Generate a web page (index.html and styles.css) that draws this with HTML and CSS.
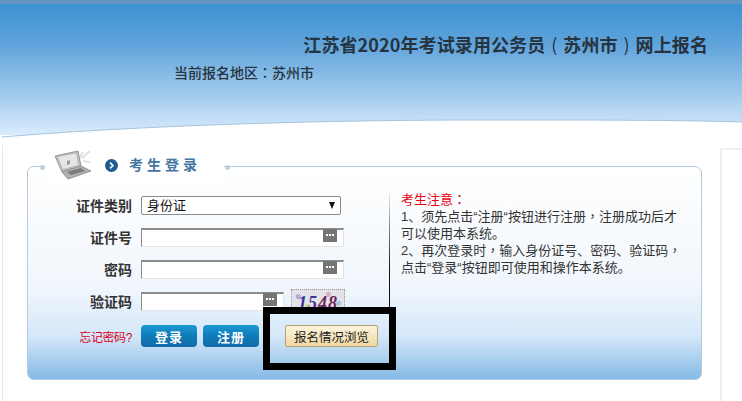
FILE: index.html
```html
<!DOCTYPE html>
<html lang="zh-CN">
<head>
    <meta charset="UTF-8">
    <title>考生登录</title>
    <link rel="stylesheet" href="styles.css">
</head>
<body>
    <div class="page">
        <div class="header">
            <h1 class="title">江苏省2020年考试录用公务员<span class="paren">(</span>苏州市<span class="paren">)</span>网上报名</h1>
            <div class="area">当前报名地区<span class="punct" lang="zh-TW">：</span>苏州市</div>
        </div>
        <svg class="curve" width="742" height="30" viewBox="0 0 742 30">
            <path d="M2 22 C 120 12 300 5 480 5 C 600 5 680 5 742 7 L742 30 L2 30 Z" fill="#fff"/>
            <path d="M2 22 C 120 12 300 5 480 5 C 600 5 680 5 742 7" fill="none" stroke="#a8c3dc"/>
        </svg>
        <div class="main">
            <div class="card">
                <div class="legend">
                    <svg class="laptop" width="38" height="32" viewBox="0 0 38 32">
                        <path d="M25 11 L29 4 M28 10 L36 3 M29 13 L36 14" stroke="#dde1e4" stroke-width="2" fill="none"/>
                        <path d="M1 8 L24 3 L27 18 L8 24 Z" fill="#bcbcbc" stroke="#9a9a9a"/>
                        <path d="M4 9 L22 5.500 L24 17 L9 21 Z" fill="#e6e6e6"/>
                        <path d="M8 24 L27 18 L37 23 L14 31 Z" fill="#b0b0b0" stroke="#969696"/>
                        <path d="M13 24 L27 20 L31 23 L17 27 Z" fill="#7c7c7c"/>
                        <path d="M13 13 L16 12 L16 16 L13 17 Z" fill="#9a9a9a"/>
                    </svg>
                    <svg class="arrow" width="13" height="13" viewBox="0 0 14 14">
                        <circle cx="7" cy="7" r="7" fill="#1f5b92"/>
                        <path d="M5.500 4 L8.500 7 L5.500 10" fill="none" stroke="#fff" stroke-width="1.800"/>
                    </svg>
                    <span class="legend-text">考生登录</span>
                </div>

                <div class="content">
                    <div class="form">
                        <div class="row">
                            <label class="row-label">证件类别</label>
                            <div class="select-wrap">
                                <select class="select">
                                    <option>身份证</option>
                                </select>
                            </div>
                        </div>
                        <div class="row">
                            <label class="row-label">证件号</label>
                            <div class="input"><span class="key-icon"></span></div>
                        </div>
                        <div class="row">
                            <label class="row-label">密码</label>
                            <div class="input"><span class="key-icon"></span></div>
                        </div>
                        <div class="row">
                            <label class="row-label">验证码</label>
                            <div class="input input-short"><span class="key-icon"></span></div>
                            <div class="captcha"><span class="captcha-a">15</span><span class="captcha-b">48</span></div>
                        </div>
                        <div class="row row-actions">
                            <a class="forgot">忘记密码?</a>
                            <button class="btn">登录</button>
                            <button class="btn">注册</button>
                            <button class="btn-browse">报名情况浏览</button>
                        </div>
                    </div>
                    <div class="notes">
                        <div class="notes-title">考生注意<span class="punct" lang="zh-TW">：</span></div>
                        <div>1、须先点击“注册“按钮进行注册<span class="punct" lang="zh-TW">，</span>注册成功后才可以使用本系统。</div>
                        <div>2、再次登录时<span class="punct" lang="zh-TW">，</span>输入身份证号、密码、验证码<span class="punct" lang="zh-TW">，</span>点击“登录“按钮即可使用和操作本系统。</div>
                    </div>
                </div>
                <div class="mark"></div>
            </div>
            <div class="side"></div>
        </div>
    </div>
</body>
</html>
```

FILE: styles.css
```css
* {
    box-sizing: border-box;
}
body {
    margin: 0;
    font-family: "Liberation Sans", "Noto Sans CJK SC", sans-serif;
    background: #fff;
    color: #222;
}
.page {
    position: relative;
    width: 742px;
    height: 401px;
    overflow: hidden;
}
.header {
    height: 135px;
    padding-top: 30px;
    border-top: 4px solid #6596c3;
    background: linear-gradient(#3e92d3, #5ea3db 30%, #a3cbee 70%, #d9ecfc);
}
.title {
    margin: 0;
    padding-right: 34px;
    font-family: "Noto Sans CJK SC", sans-serif;
    font-size: 18px;
    line-height: 20px;
    font-weight: 700;
    letter-spacing: 0.1px;
    text-align: right;
    color: #26343f;
}
.paren {
    display: inline-block;
    width: 18px;
    text-align: center;
    font-weight: 400;
}
.area {
    margin-top: 8px;
    padding-left: 174px;
    font-family: "Noto Sans CJK SC", sans-serif;
    font-size: 14px;
    line-height: 20px;
    font-weight: 500;
    color: #26343f;
}
.punct {
    font-family: "Noto Sans CJK TC", sans-serif;
    line-height: 0;
}
.curve {
    position: absolute;
    left: 0;
    top: 115px;
}
.main {
    display: flex;
    align-items: flex-start;
    height: 266px;
    margin-left: 2px;
    padding: 31px 0 0 24px;
    border-left: 1px solid #e4e8ec;
}
.card {
    position: relative;
    width: 675px;
    height: 214px;
    flex-shrink: 0;
    padding-top: 22px;
    border: 1px solid #b4cadd;
    border-radius: 7px;
    background: linear-gradient(#fff, #f0f6fc 58%, #d4e7f9 80%, #85bae6);
}
.legend {
    position: absolute;
    left: 17px;
    top: -17px;
    width: 179px;
    height: 34px;
    display: flex;
    align-items: center;
    background: #fff;
}
.legend::before,
.legend::after {
    content: "";
    position: absolute;
    top: 15px;
    width: 5px;
    height: 5px;
    border-radius: 50%;
    background: #b7d1e6;
}
.legend::before {
    left: -5px;
}
.legend::after {
    right: -6px;
}
.laptop {
    margin-left: 9px;
    margin-top: -7px;
}
.arrow {
    margin-left: 13px;
    margin-top: -3px;
}
.legend-text {
    margin-left: 11px;
    margin-top: -7px;
    font-size: 14px;
    font-weight: 700;
    letter-spacing: 4px;
    color: #42759f;
}
.content {
    display: flex;
}
.form {
    width: 361px;
}
.row {
    display: flex;
    align-items: center;
    height: 32px;
}
.row-label {
    width: 104px;
    margin-right: 9px;
    font-size: 14px;
    font-weight: 700;
    text-align: right;
    color: #333;
}
.select-wrap {
    position: relative;
    width: 200px;
    height: 19px;
}
.select-wrap::after {
    content: "";
    position: absolute;
    right: 6px;
    top: 6px;
    border-left: 3.500px solid transparent;
    border-right: 3.500px solid transparent;
    border-top: 7px solid #111;
}
.select {
    width: 100%;
    height: 100%;
    padding: 0 0 0 5px;
    appearance: none;
    border: 1px solid #8a8a8a;
    border-radius: 2px;
    background: #fff;
    font-family: inherit;
    font-size: 13px;
    color: #111;
}
.input {
    display: flex;
    justify-content: flex-end;
    width: 203px;
    height: 19px;
    padding-right: 6px;
    border-style: solid;
    border-width: 2px 1px 1px 1px;
    border-color: #8b8b8b #e2e4e6 #e2e4e6 #8b8b8b;
    background: #fff;
}
.input-short {
    width: 143px;
}
.key-icon {
    display: flex;
    align-items: center;
    justify-content: center;
    width: 14px;
    height: 13px;
    margin-top: -1px;
    background: #747474;
}
.key-icon::after {
    content: "";
    width: 8px;
    height: 2px;
    background: repeating-linear-gradient(90deg, #fff 0 2px, transparent 2px 3px);
}
.captcha {
    width: 54px;
    height: 24px;
    margin-left: 7px;
    border: 1px dotted #999;
    background:
        radial-gradient(circle at 12% 30%, #b9a8d8 0 2px, transparent 3px),
        radial-gradient(circle at 30% 75%, #c7d2a8 0 2px, transparent 3px),
        radial-gradient(circle at 70% 20%, #d8b0c8 0 2px, transparent 3px),
        radial-gradient(circle at 90% 60%, #a8c0d8 0 2px, transparent 3px),
        #e4e2e6;
    font-family: "Liberation Serif", serif;
    font-size: 18px;
    font-style: italic;
    font-weight: 700;
    line-height: 27px;
    letter-spacing: 1px;
    text-align: center;
}
.captcha-a {
    color: #3b32a0;
}
.captcha-b {
    color: #6d2a5c;
}
.row-actions {
    margin-top: 3px;
}
.forgot {
    width: 104px;
    margin-right: 9px;
    font-size: 12px;
    letter-spacing: -0.4px;
    text-align: right;
    color: #d9001b;
}
.btn {
    width: 56px;
    height: 22px;
    margin-right: 6px;
    padding: 0;
    border: none;
    border-radius: 4px;
    background: linear-gradient(#1c9bd4, #0f7dbd 45%, #136ba6);
    font-family: inherit;
    font-size: 13px;
    font-weight: 700;
    letter-spacing: 1px;
    color: #fff;
}
.btn-browse {
    width: 93px;
    height: 22px;
    margin-left: 20px;
    padding: 0;
    border: 1px solid #b5a377;
    border-radius: 2px;
    background: linear-gradient(#fcf4dc, #eed9a2);
    font-family: inherit;
    font-size: 12.500px;
    color: #222;
}
.notes {
    width: 300px;
    height: 162px;
    padding: 2px 5px 0 11px;
    border-left: 1px solid;
    border-image: linear-gradient(transparent, #999 20%, #111 50%) 1;
    font-size: 13px;
    line-height: 17px;
    color: #333;
}
.notes-title {
    color: #e60012;
}
.mark {
    position: absolute;
    left: 235px;
    top: 140px;
    width: 133px;
    height: 63px;
    border: 7px solid #000;
}
.side {
    flex-grow: 1;
    height: 260px;
    margin: -18px 0 0 18px;
    border-top: 2px solid #f0f0f0;
    border-left: 2px solid #f0f0f0;
    background: #fff;
}
```
